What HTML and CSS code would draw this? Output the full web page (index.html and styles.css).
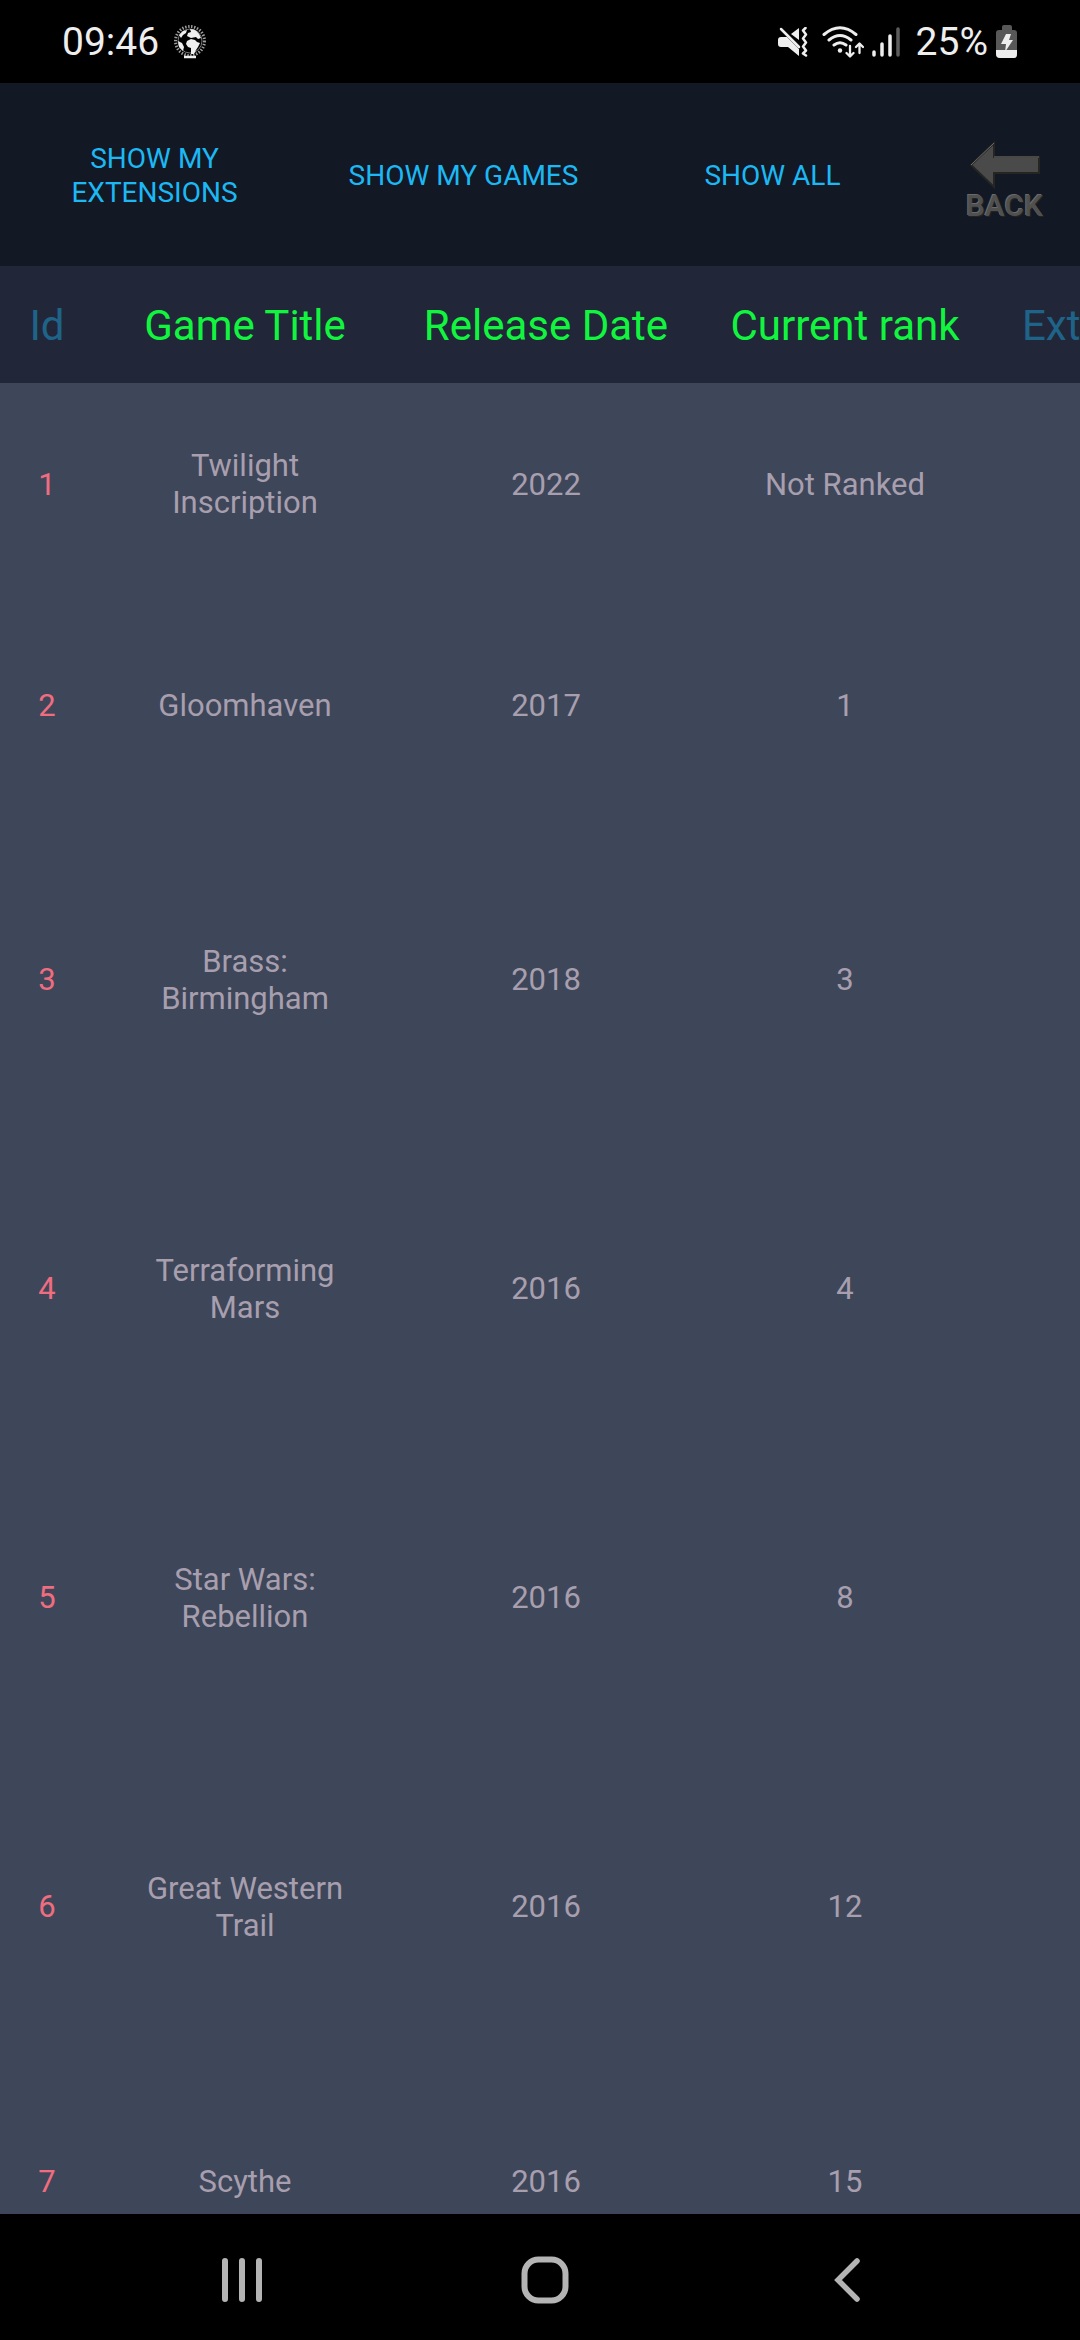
FILE: index.html
```html
<!DOCTYPE html>
<html lang="en">
<head>
<meta charset="utf-8">
<meta name="viewport" content="width=device-width, initial-scale=1">
<title>Game list</title>
<link rel="stylesheet" href="styles.css">
</head>
<body class="screen">
<div class="status">
  <span class="status-text">09:46</span>
  <svg class="globe" width="34" height="36" viewBox="0 0 34 36" aria-hidden="true">
    <circle cx="17" cy="17" r="14.5" fill="none" stroke="#a0a0a0" stroke-width="3" stroke-dasharray="1.400 1.600"/>
    <circle cx="17" cy="17" r="12" fill="#000" stroke="#777" stroke-width="1"/>
    <path d="M17 5q8 0 11 9l-3 1-2-2-5 1-4-2 1-3 3-1zM14 17l4-2 4 1 2 2 3 1-2 4-2 3-2 4-3 0 0-6-3-1-2-3zM6 11l4-4 4-1-1 3-3 2-2 3zM5 17l4 2 2 4-1 4-4-4z" fill="#eee"/>
    <path d="M11 33h12" stroke="#eee" stroke-width="2.5"/>
  </svg>
  <div class="status-icons">
    <svg width="30" height="30" viewBox="0 0 30 30" aria-hidden="true">
      <path d="M1 10h8l12 12v7l-11-9H3q-3 0-3-3v-4q0-3 3-3zM13 7l8-6v12z" fill="#eee"/>
      <path d="M3 2l18 18" stroke="#eee" stroke-width="2.5" stroke-linecap="round"/>
      <path d="M27.500 1l-2.500 2.500 3 4-3 4 3 4-3 4 3 4-3 3 3 2" fill="none" stroke="#eee" stroke-width="2.500" stroke-linecap="round" stroke-linejoin="round"/>
    </svg>
    <svg class="wifi" width="42" height="32" viewBox="0 0 42 32" aria-hidden="true">
      <g fill="none" stroke="#eee" stroke-width="3" stroke-linecap="round" stroke-linejoin="round">
        <path d="M2 8.500Q18-5 34 8.500M7 14q11-9 22 0M12 19q6-4.500 12 0"/>
        <path d="M28 20v10M24.500 27l3.500 3.500 3.500-3.500M37.500 27V18M34 21l3.500-3.500 3.500 3.500" stroke-width="2.300"/>
      </g>
      <circle cx="18" cy="24.500" r="2.200" fill="#eee"/>
    </svg>
    <svg class="signal" width="28" height="30" viewBox="0 0 28 30" aria-hidden="true">
      <path d="M2 25v3M10 17v11M18 9v19" stroke="#eee" stroke-width="3.500" stroke-linecap="round"/>
      <path d="M26 2v26" stroke="#5c5c5c" stroke-width="3.500" stroke-linecap="round"/>
    </svg>
    <span class="status-text">25%</span>
    <svg class="battery" width="22" height="33" viewBox="0 0 22 33" aria-hidden="true">
      <path d="M6 5V2q0-2 2-2h6q2 0 2 2v3h2q3 0 3 3v21q0 4-3 4H4q-4 0-4-4V8q0-3 3-3z" fill="#585858"/>
      <path d="M0 25h21v4q0 4-3 4H4q-4 0-4-4z" fill="#eee"/>
      <path d="M10 9h5l-2 6h4l-8 12 1-8H5z" fill="#eee"/>
    </svg>
  </div>
</div>

<header class="toolbar">
  <button class="filter" type="button">SHOW MY EXTENSIONS</button>
  <button class="filter" type="button">SHOW MY GAMES</button>
  <button class="filter" type="button">SHOW ALL</button>
  <button class="back" type="button">
    <svg width="72" height="48" viewBox="0 0 72 48" aria-hidden="true">
      <path d="M2 24L25 2v14h45v16H25v14z" fill="#4a4a4a" stroke="#252522" stroke-width="2"/>
      <path d="M2 24L25 2M25 16h45" stroke="#6c6c6c" stroke-width="1" fill="none"/>
    </svg>
    <span class="back-label">BACK</span>
  </button>
</header>

<main class="list">
  <table class="games">
    <colgroup>
      <col class="col-id"><col class="col-title"><col class="col-date"><col class="col-rank"><col class="col-ext">
    </colgroup>
    <thead>
      <tr>
        <th class="muted" scope="col">Id</th>
        <th scope="col">Game Title</th>
        <th scope="col">Release Date</th>
        <th scope="col">Current rank</th>
        <th class="muted ext" scope="col">Extension</th>
      </tr>
    </thead>
    <tbody>
      <tr class="small"><td class="id">1</td><td class="title">Twilight Inscription</td><td>2022</td><td>Not Ranked</td><td></td></tr>
      <tr class="medium"><td class="id">2</td><td class="title">Gloomhaven</td><td>2017</td><td>1</td><td></td></tr>
      <tr class="large"><td class="id">3</td><td class="title">Brass: Birmingham</td><td>2018</td><td>3</td><td></td></tr>
      <tr class="large"><td class="id">4</td><td class="title">Terraforming Mars</td><td>2016</td><td>4</td><td></td></tr>
      <tr class="large"><td class="id">5</td><td class="title">Star Wars: Rebellion</td><td>2016</td><td>8</td><td></td></tr>
      <tr class="large"><td class="id">6</td><td class="title">Great Western Trail</td><td>2016</td><td>12</td><td></td></tr>
      <tr class="medium"><td class="id">7</td><td class="title">Scythe</td><td>2016</td><td>15</td><td></td></tr>
    </tbody>
  </table>
</main>

<nav class="nav">
  <button type="button" aria-label="Recent apps">
    <svg width="48" height="48" viewBox="0 0 48 48"><path d="M7 5v38M24 5v38M41 5v38" stroke="#b4b4b4" stroke-width="6" stroke-linecap="round"/></svg>
  </button>
  <button type="button" aria-label="Home">
    <svg width="48" height="48" viewBox="0 0 48 48"><rect x="3.500" y="3.500" width="41" height="41" rx="14" fill="none" stroke="#b4b4b4" stroke-width="6"/></svg>
  </button>
  <button type="button" aria-label="Back">
    <svg width="48" height="48" viewBox="0 0 48 48"><path d="M33 5L14 24l19 19" fill="none" stroke="#b4b4b4" stroke-width="5.500" stroke-linecap="round"/></svg>
  </button>
</nav>
</body>
</html>
```

FILE: styles.css
```css
* {
  box-sizing: border-box;
}

.screen {
  margin: 0;
  height: 100vh;
  display: flex;
  flex-direction: column;
  overflow: hidden;
  background: #000;
  font-family: Roboto, "Noto Sans", sans-serif;
}

button {
  border: 0;
  padding: 0;
  background: none;
  font-family: inherit;
}

svg {
  display: block;
  flex: none;
}

/* Status bar */
.status {
  display: flex;
  align-items: center;
  height: 83px;
  padding: 0 62px;
  color: #eee;
}

.status-text {
  font-size: 39px;
  line-height: 44px;
}

.globe {
  margin-left: 14px;
}

.status-icons {
  display: flex;
  align-items: center;
  margin-left: auto;
}

.wifi {
  margin-left: 14px;
}

.signal {
  margin: 0 16px 0 8px;
}

.battery {
  margin-left: 8px;
}

/* Toolbar */
.toolbar {
  display: flex;
  height: 183px;
  background: #121824;
}

.filter {
  flex: 1;
  padding: 2px 24px 0;
  color: #1cb8f4;
  font-size: 28px;
  line-height: 34px;
}

.back {
  display: flex;
  flex-direction: column;
  align-items: center;
  justify-content: center;
  width: 153px;
  padding: 14px 0 0 2px;
}

.back-label {
  color: #505050;
  font-size: 30px;
  font-weight: 500;
  line-height: 34px;
  text-shadow: -1px -1px 0 #6a6a6a, 1px 1px 1px #262622;
}

/* Game table */
.list {
  flex: 1;
  min-height: 0;
  overflow: hidden;
  background: #3e465a;
}

.games {
  width: 1392px;
  table-layout: fixed;
  border-collapse: collapse;
  text-align: center;
}

.col-id {
  width: 94px;
}

.col-title {
  width: 302px;
}

.col-date {
  width: 300px;
}

.col-rank {
  width: 298px;
}

.games th {
  height: 117px;
  padding: 2px 0 0;
  background: #212738;
  color: #12f53f;
  font-size: 42px;
  font-weight: 400;
  line-height: 48px;
}

.games th.muted {
  color: #1f6488;
}

.games th.ext {
  padding-left: 28px;
  text-align: left;
}

.games td {
  padding: 0;
  color: #a89fae;
  font-size: 31px;
  line-height: 37px;
}

.games td.id {
  color: #f06d80;
}

.games td.title {
  padding: 0 48px;
}

.small {
  height: 202px;
}

.medium {
  height: 240px;
}

.large {
  height: 309px;
}

/* System navigation */
.nav {
  display: grid;
  grid-template-columns: repeat(3, 1fr);
  height: 126px;
  padding: 6px 80px 0 90px;
}

.nav button {
  display: flex;
  align-items: center;
  justify-content: center;
}
```
